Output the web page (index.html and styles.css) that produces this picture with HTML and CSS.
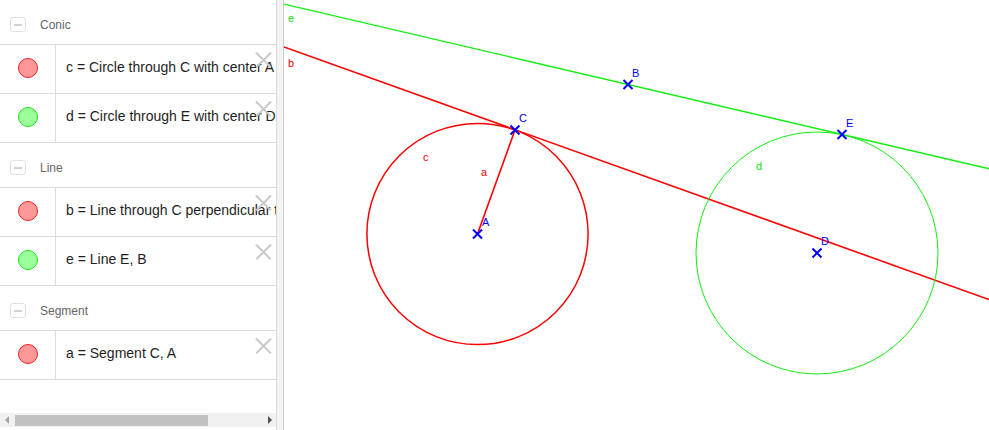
FILE: index.html
```html
<!DOCTYPE html>
<html>
<head>
<meta charset="utf-8">
<link rel="stylesheet" href="styles.css">
</head>
<body>
<div class="app">
  <aside class="algebra">
    <div class="list">
      <div class="group">
        <div class="group-head"><span class="toggle"><span class="minus"></span></span><span class="group-name">Conic</span></div>
        <div class="item">
          <div class="marble-cell"><span class="marble red"></span></div>
          <div class="item-text">c = Circle through C with center A</div>
          <span class="del"></span>
        </div>
        <div class="item">
          <div class="marble-cell"><span class="marble green"></span></div>
          <div class="item-text">d = Circle through E with center D</div>
          <span class="del"></span>
        </div>
      </div>
      <div class="group">
        <div class="group-head"><span class="toggle"><span class="minus"></span></span><span class="group-name">Line</span></div>
        <div class="item">
          <div class="marble-cell"><span class="marble red"></span></div>
          <div class="item-text">b = Line through C perpendicular to a</div>
          <span class="del"></span>
        </div>
        <div class="item">
          <div class="marble-cell"><span class="marble green"></span></div>
          <div class="item-text">e = Line E, B</div>
          <span class="del"></span>
        </div>
      </div>
      <div class="group">
        <div class="group-head"><span class="toggle"><span class="minus"></span></span><span class="group-name">Segment</span></div>
        <div class="item">
          <div class="marble-cell"><span class="marble red"></span></div>
          <div class="item-text">a = Segment C, A</div>
          <span class="del"></span>
        </div>
      </div>
    </div>
    <div class="hscroll">
      <span class="arrow left"></span>
      <span class="track"><span class="thumb"></span></span>
      <span class="arrow right"></span>
    </div>
  </aside>
  <div class="splitter"></div>
  <main class="graphics">
    <svg class="canvas" viewBox="284 0 705 430" width="705" height="430" xmlns="http://www.w3.org/2000/svg">
      <line x1="284" y1="4.1" x2="989" y2="168.8" stroke="#11ee11" stroke-width="1.4"/>
      <line x1="284" y1="47" x2="989" y2="299.5" stroke="#ff0000" stroke-width="1.6"/>
      <circle cx="477.5" cy="234" r="110.6" fill="none" stroke="#ff0000" stroke-width="1.5"/>
      <circle cx="817" cy="253" r="121" fill="none" stroke="#11ee11" stroke-width="1"/>
      <line x1="477.5" y1="234" x2="515" y2="130" stroke="#ff0000" stroke-width="1.6"/>
      <g stroke="#0000ff" stroke-width="2">
        <path d="M473,229.5 L482,238.5 M482,229.5 L473,238.5"/>
        <path d="M510.5,125.5 L519.5,134.5 M519.5,125.5 L510.5,134.5"/>
        <path d="M623.5,80 L632.5,89 M632.5,80 L623.5,89"/>
        <path d="M837.5,130 L846.5,139 M846.5,130 L837.5,139"/>
        <path d="M812.5,248.5 L821.5,257.5 M821.5,248.5 L812.5,257.5"/>
      </g>
      <g class="lbl">
        <text x="288" y="22" fill="#11dd11">e</text>
        <text x="288" y="67" fill="#ff0000">b</text>
        <text x="632" y="77" fill="#0000ff">B</text>
        <text x="519" y="122" fill="#0000ff">C</text>
        <text x="846" y="127" fill="#0000ff">E</text>
        <text x="482" y="226" fill="#0000ff">A</text>
        <text x="821" y="245" fill="#0000ff">D</text>
        <text x="423" y="161" fill="#ff0000">c</text>
        <text x="481" y="176" fill="#ff0000">a</text>
        <text x="756" y="170" fill="#11dd11">d</text>
      </g>
    </svg>
  </main>
</div>
</body>
</html>
```

FILE: styles.css
```css
html, body {
  margin: 0;
  padding: 0;
  background: #ffffff;
  font-family: "Liberation Sans", Arial, sans-serif;
}

.app {
  display: flex;
  width: 989px;
  height: 430px;
  overflow: hidden;
}

.algebra {
  width: 277px;
  box-sizing: border-box;
  border-right: 1px solid #dcdcdc;
  display: flex;
  flex-direction: column;
  flex: none;
  overflow: hidden;
}

.list {
  flex: 1;
  overflow: hidden;
}

.group-head {
  height: 44px;
  box-sizing: border-box;
  padding-top: 5px;
  border-bottom: 1px solid #dddddd;
  display: flex;
  align-items: center;
}

.group-head {
  height: 45px;
}

.toggle {
  width: 14px;
  height: 13px;
  margin-left: 10px;
  border: 1px solid #e0e0e0;
  border-radius: 3px;
  display: flex;
  align-items: center;
  justify-content: center;
  flex: none;
}

.minus {
  width: 8px;
  height: 2px;
  background: #d0d0d0;
}

.group-name {
  margin-left: 14px;
  font-size: 12px;
  color: #666666;
}

.item {
  position: relative;
  height: 48px;
  border-bottom: 1px solid #dddddd;
  display: flex;
}

.marble-cell {
  width: 56px;
  flex: none;
  border-right: 1px solid #dddddd;
  display: flex;
  align-items: center;
  justify-content: center;
  padding-bottom: 3px;
  box-sizing: border-box;
}

.marble {
  width: 18px;
  height: 18px;
  border-radius: 50%;
  display: block;
}

.marble.red {
  background: #ff9999;
  border: 1px solid #ee2222;
}

.marble.green {
  background: #99ff99;
  border: 1px solid #22dd22;
}

.item-text {
  padding-left: 10px;
  padding-bottom: 4px;
  font-size: 14px;
  color: #1e1e1e;
  white-space: nowrap;
  display: flex;
  align-items: center;
}

.del {
  position: absolute;
  right: 5px;
  top: 7px;
  width: 16px;
  height: 16px;
}

.del::before,
.del::after {
  content: "";
  position: absolute;
  left: -2px;
  top: 7px;
  width: 21px;
  height: 1.6px;
  background: #c8c8c8;
  transform: rotate(45deg);
}

.del::after {
  transform: rotate(-45deg);
}

.hscroll {
  height: 14px;
  margin-bottom: 3px;
  background: #f1f1f1;
  display: flex;
  align-items: center;
}

.arrow {
  width: 0;
  height: 0;
  border-top: 4px solid transparent;
  border-bottom: 4px solid transparent;
  flex: none;
}

.arrow.left {
  margin-left: 5px;
  border-right: 4px solid #a3a3a3;
}

.arrow.right {
  margin-right: 4px;
  border-left: 4px solid #505050;
}

.track {
  flex: 1;
  height: 11px;
  padding-left: 6px;
}

.thumb {
  display: block;
  width: 193px;
  height: 11px;
  background: #c1c1c1;
}

.splitter {
  width: 7px;
  flex: none;
  box-sizing: border-box;
  background: #f4f4f4;
  border-right: 1px solid #cccccc;
}

.graphics {
  flex: 1;
  position: relative;
  overflow: hidden;
}

.canvas {
  display: block;
}

.lbl text {
  font-family: "Liberation Sans", Arial, sans-serif;
  font-size: 11px;
}
```
